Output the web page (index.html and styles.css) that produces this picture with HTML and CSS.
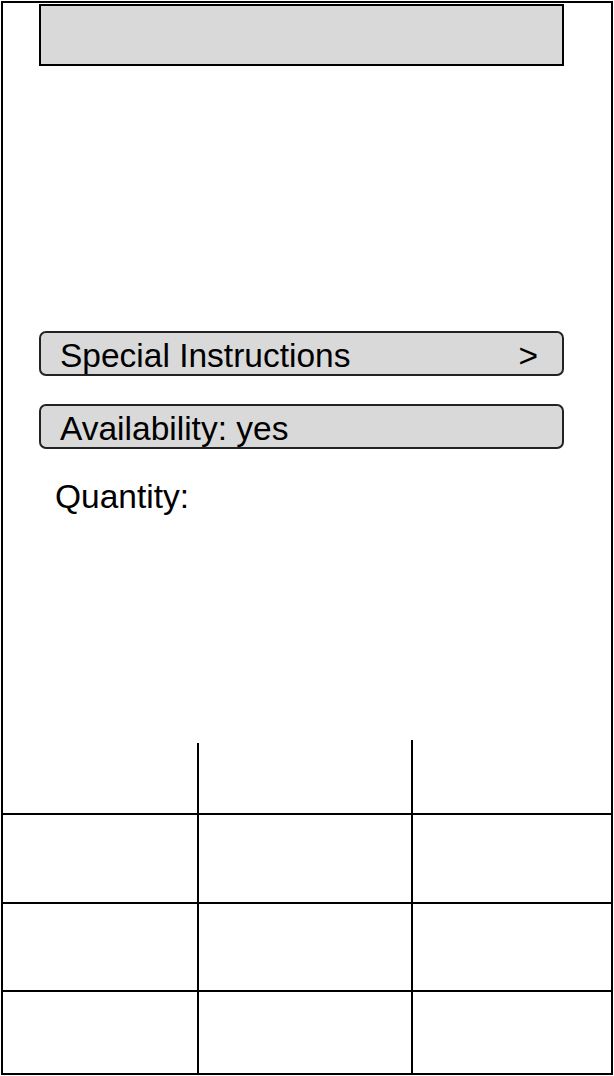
FILE: index.html
```html
<!DOCTYPE html>
<html lang="en">
<head>
<meta charset="utf-8">
<title>Item</title>
<link rel="stylesheet" href="styles.css">
</head>
<body>
<div class="frame">
  <div class="title-bar"></div>
  <div class="option option-first">
    <span>Special Instructions</span>
    <span class="chevron">&gt;</span>
  </div>
  <div class="option option-second">
    <span>Availability: yes</span>
  </div>
  <div class="quantity">Quantity:</div>
  <div class="grid">
    <div class="row row-head">
      <div class="cell cell-a"></div>
      <div class="cell cell-b head-b"></div>
      <div class="cell cell-c head-c"></div>
    </div>
    <div class="row row-1">
      <div class="cell cell-a"></div>
      <div class="cell cell-b"></div>
      <div class="cell cell-c"></div>
    </div>
    <div class="row row-2">
      <div class="cell cell-a"></div>
      <div class="cell cell-b"></div>
      <div class="cell cell-c"></div>
    </div>
    <div class="row row-3">
      <div class="cell cell-a"></div>
      <div class="cell cell-b"></div>
      <div class="cell cell-c"></div>
    </div>
  </div>
</div>
</body>
</html>
```
FILE: styles.css
```css
html, body {
  margin: 0;
  padding: 0;
  background: #fff;
}

body {
  font-family: "Liberation Sans", Arial, sans-serif;
  color: #000;
}

.frame {
  box-sizing: border-box;
  margin: 1px 1px 0 1px;
  width: 612px;
  height: 1074px;
  border: 2px solid #000;
  display: flex;
  flex-direction: column;
}

.title-bar {
  box-sizing: border-box;
  margin: 1px 0 0 36px;
  width: 525px;
  height: 62px;
  background: #d9d9d9;
  border: 2px solid #000;
}

.option {
  box-sizing: border-box;
  margin-left: 36px;
  width: 525px;
  height: 45px;
  background: #d9d9d9;
  border: 2px solid #222;
  border-radius: 7px;
  display: flex;
  align-items: center;
  justify-content: space-between;
  padding: 4px 24px 0 19px;
  font-size: 33.5px;
  line-height: 38px;
}

.option-first {
  margin-top: 265px;
}

.option-second {
  margin-top: 28px;
}

.quantity {
  margin-top: 29px;
  padding-left: 52px;
  font-size: 33.5px;
  line-height: 38px;
}

.grid {
  margin-top: auto;
  display: flex;
  flex-direction: column;
}

.row {
  display: grid;
  grid-template-columns: 194px 214px 1fr;
}

.row-head {
  height: 73px;
}

.row-1,
.row-2,
.row-3 {
  box-sizing: border-box;
  border-top: 2px solid #000;
}

.row-1 { height: 89px; }
.row-2 { height: 88px; }
.row-3 { height: 83px; }

.cell-b,
.cell-c {
  border-left: 2px solid #000;
}

.head-b {
  margin-top: 3px;
}
```
